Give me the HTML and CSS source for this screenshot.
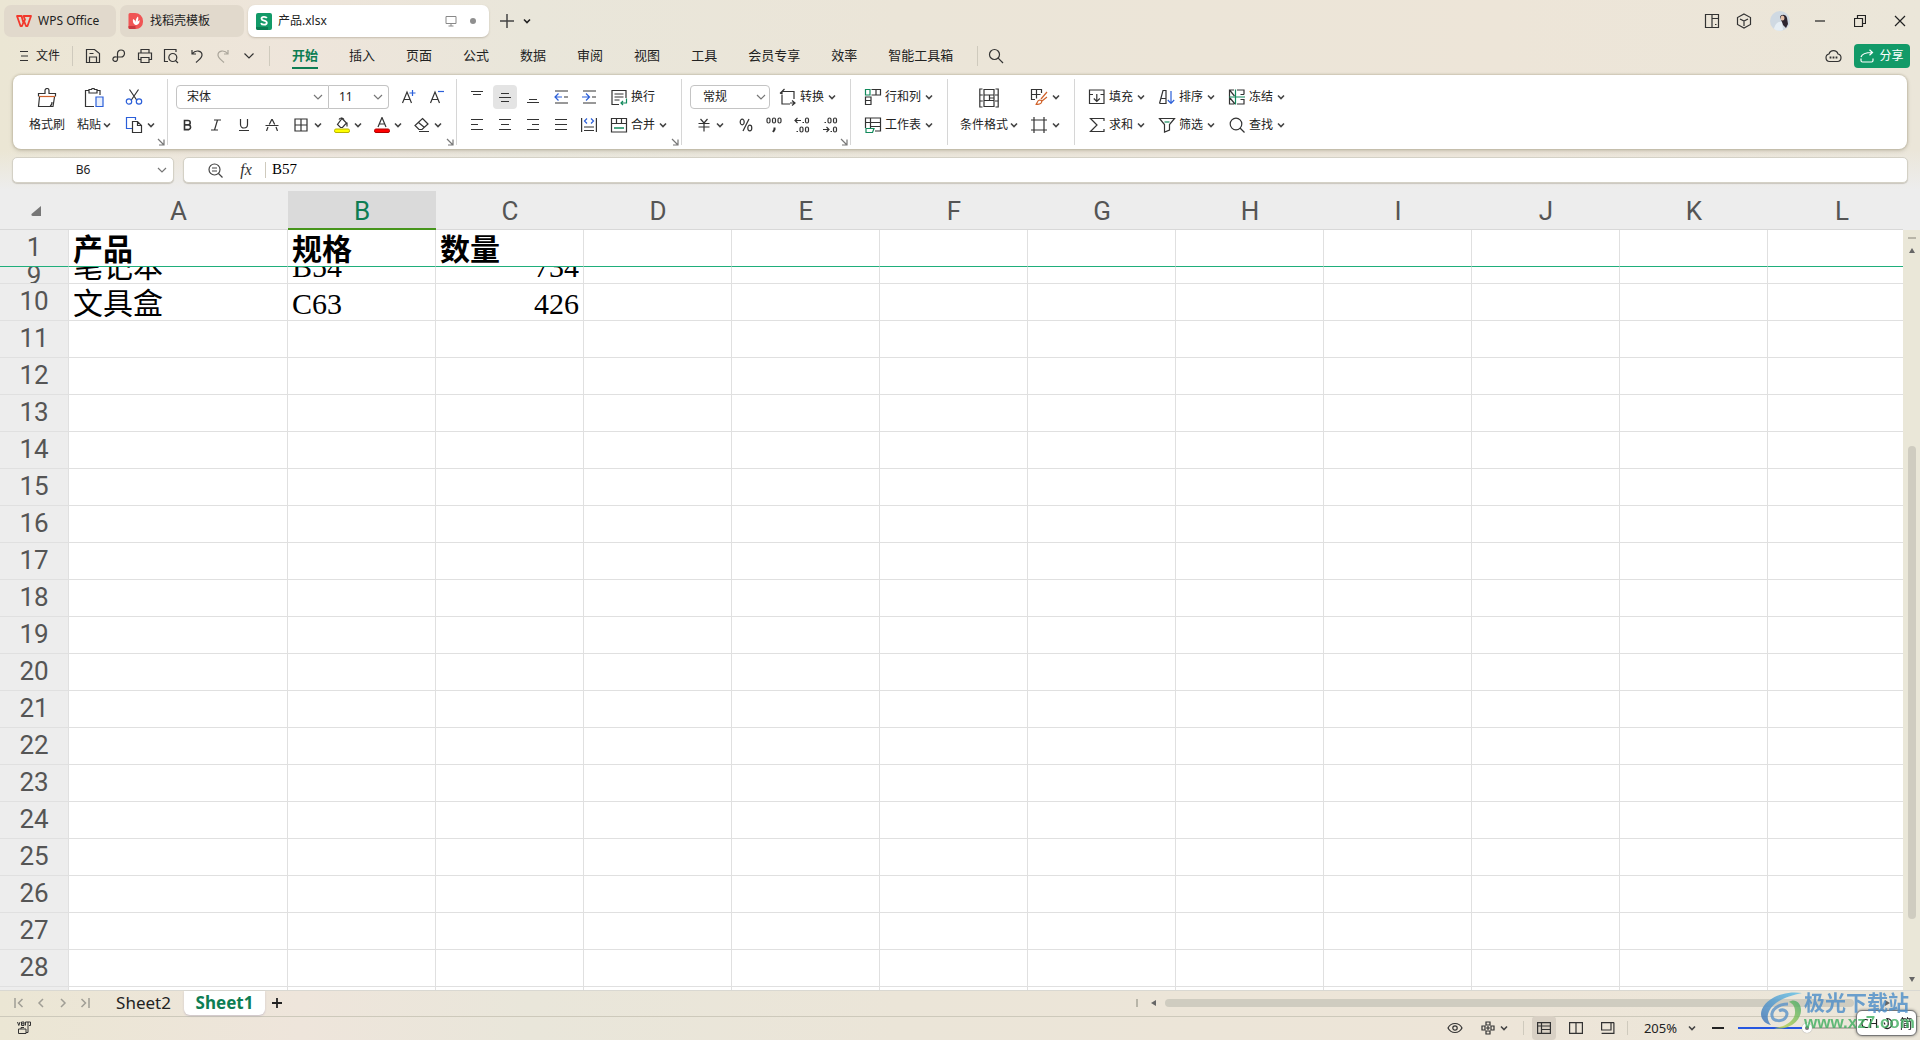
FILE: index.html
```html
<!DOCTYPE html>
<html lang="zh-CN">
<head>
<meta charset="utf-8">
<title>产品.xlsx - WPS Office</title>
<link rel="stylesheet" href="styles.css">
</head>
<body>
<svg class="defs" aria-hidden="true">
  <symbol id="chev" viewBox="0 0 8 8"><path d="M1 2.500l3 3 3-3" fill="none" stroke="currentColor" stroke-width="1.600"/></symbol>
  <symbol id="launch" viewBox="0 0 8 8"><path d="M1 1l5.500 5.500M7 1.500V7H2" fill="none" stroke="#777" stroke-width="1.200"/></symbol>
</svg>

<header class="titlebar">
  <button class="tab tab-home">
    <svg width="16" height="12" viewBox="0 0 16 12"><path d="M1 1h4.500l2 7 1.500-3.500L7.500 1H15l-3.500 10h-1.500L8 6 6 11H4.500z" fill="none" stroke="#f2382c" stroke-width="1.800" stroke-linejoin="round"/></svg>
    <span>WPS Office</span>
  </button>
  <button class="tab tab-template">
    <svg width="16" height="18" viewBox="0 0 16 18"><path d="M2 1h5a8 8 0 0 1 8 8v1a7 7 0 0 1-7 7H2a1.500 1.500 0 0 1-1.500-1.500v-13A1.500 1.500 0 0 1 2 1z" fill="#f05555"/><path d="M.5 14h7v3H2a1.500 1.500 0 0 1-1.500-1.500z" fill="#c93a40"/><path d="M7.500 13C5 12 4.500 9 5 7c2 1 2.500 2 2.500 3.500C7.500 8 8.500 5.500 10 4.500c.5 2 .5 3-.5 5 1-.5 1.500-1 2-1.500.5 3-1.500 5-4 5z" fill="#fff"/></svg>
    <span>找稻壳模板</span>
  </button>
  <button class="tab tab-file">
    <svg width="16" height="17" viewBox="0 0 16 17"><rect width="16" height="17" rx="2" fill="#129a68"/><path d="M0 14h12v3H2a2 2 0 0 1-2-2z" fill="#0a7c52"/><path d="M10.800 5.200C10 3.500 5.500 3.300 5.500 5.700c0 2.500 5.300 1.400 5.300 4.100 0 2.600-5 2.400-5.800.3" fill="none" stroke="#fff" stroke-width="1.800"/></svg>
    <span class="tab-name">产品.xlsx</span>
    <svg width="12" height="12" viewBox="0 0 12 12"><path d="M1 1.500h10v7H1zM3.500 11h5M6 8.500V11" fill="none" stroke="#888"/></svg>
    <span class="unsaved"></span>
  </button>
  <div class="new-tab">
    <button class="flat w28" aria-label="新建"><svg width="14" height="14" viewBox="0 0 14 14"><path d="M7 0v14M0 7h14" stroke="#444" stroke-width="1.500"/></svg></button>
    <button class="flat w12" aria-label="标签列表"><svg width="8" height="8"><use href="#chev"/></svg></button>
  </div>
  <div class="window-tools">
    <button class="flat w32" aria-label="分屏"><svg width="16" height="16" viewBox="0 0 16 16"><path d="M1.500 1.500h13v13h-13zM8 14.500v-13M8.500 5.500h6M11 11.500h1.500" fill="none" stroke="#333" stroke-width="1.200"/></svg></button>
    <button class="flat w32" aria-label="应用"><svg width="16" height="16" viewBox="0 0 16 16"><path d="M8 1l6.500 3.500v7L8 15l-6.500-3.500v-7zM4 6l4 2 4-2M8 8v5" fill="none" stroke="#333" stroke-width="1.200"/></svg></button>
    <button class="flat w40" aria-label="账号"><svg width="20" height="20" viewBox="0 0 20 20"><circle cx="10" cy="10" r="10" fill="#cfd9e2"/><path d="M10 6c1-3 6-3 7 1l1 6-2 4-3-3z" fill="#2c2530"/><ellipse cx="12.500" cy="7" rx="2" ry="2.600" fill="#e4bfa8"/><path d="M4 18c1-6 5-8 8-7l1 8a9 9 0 0 1-9-1z" fill="#e6eef4"/></svg></button>
    <button class="flat w40" aria-label="最小化"><svg width="12" height="12" viewBox="0 0 12 12"><path d="M1 6h10" stroke="#222" stroke-width="1.200"/></svg></button>
    <button class="flat w40" aria-label="还原"><svg width="12" height="12" viewBox="0 0 12 12"><path d="M.5 3.500h8v8h-8zM3.500 3.500v-3h8v8h-3" fill="none" stroke="#222" stroke-width="1.200"/></svg></button>
    <button class="flat w40" aria-label="关闭"><svg width="12" height="12" viewBox="0 0 12 12"><path d="M1 1l10 10M11 1L1 11" stroke="#222" stroke-width="1.200"/></svg></button>
  </div>
</header>

<nav class="menubar">
  <button class="file-menu"><svg width="10" height="12" viewBox="0 0 10 12"><path d="M1 1.500h8M2 6h7M1 10.500h8" stroke="#333" stroke-width="1.200"/></svg><span>文件</span></button>
  <span class="vline"></span>
  <div class="quick">
    <button class="flat w26" aria-label="保存"><svg width="16" height="16" viewBox="0 0 16 16"><path d="M1.500 1.500h8l5 4v9h-13zM4.500 14V9h7v5M4.500 5.500h4" fill="none" stroke="#333" stroke-width="1.200"/></svg></button>
    <button class="flat w26" aria-label="输出"><svg width="16" height="16" viewBox="0 0 16 16"><path d="M6.500 9V5.500A3.500 3.500 0 1 1 10 9H5a2.300 2.300 0 1 0 1.500 2.300V9" fill="none" stroke="#333" stroke-width="1.200"/></svg></button>
    <button class="flat w26" aria-label="打印"><svg width="16" height="16" viewBox="0 0 16 16"><path d="M4 5V1.500h8V5M4 11.500H1.500V5h13v6.500H12M4 9.500h8v5H4z" fill="none" stroke="#333" stroke-width="1.200"/></svg></button>
    <button class="flat w26" aria-label="打印预览"><svg width="16" height="16" viewBox="0 0 16 16"><path d="M5 13.500H1.500v-12H13V4M12.500 12.500L15 15" fill="none" stroke="#333" stroke-width="1.200"/><circle cx="9.800" cy="9.500" r="4" fill="none" stroke="#333" stroke-width="1.200"/></svg></button>
    <button class="flat w26" aria-label="撤销"><svg width="16" height="16" viewBox="0 0 16 16"><path d="M3 2v4h4M3 6c4-5 10-3 10 1 0 3-3 4.500-6 7.500" fill="none" stroke="#333" stroke-width="1.200"/></svg></button>
    <button class="flat w26" aria-label="恢复"><svg width="16" height="16" viewBox="0 0 16 16"><path d="M13 2v4H9M13 6C9 1 3 3 3 7c0 3 3 4.500 6 7.500" fill="none" stroke="#aaa59a" stroke-width="1.200"/></svg></button>
    <button class="flat w26" aria-label="更多"><svg width="12" height="12" viewBox="0 0 12 12"><path d="M1.500 3.500L6 8l4.500-4.500" fill="none" stroke="#333" stroke-width="1.200"/></svg></button>
  </div>
  <span class="vline"></span>
  <div class="menus">
    <a href="#" class="current">开始</a><a href="#">插入</a><a href="#">页面</a><a href="#">公式</a><a href="#">数据</a><a href="#">审阅</a><a href="#">视图</a><a href="#">工具</a><a href="#">会员专享</a><a href="#">效率</a><a href="#">智能工具箱</a>
  </div>
  <span class="vline"></span>
  <button class="flat w36" aria-label="搜索"><svg width="16" height="16" viewBox="0 0 16 16"><circle cx="6.500" cy="6.500" r="5" fill="none" stroke="#333" stroke-width="1.200"/><path d="M10.200 10.200L15 15" stroke="#333" stroke-width="1.200"/></svg></button>
  <div class="menu-right">
    <button class="flat" aria-label="云同步"><svg width="17" height="14" viewBox="0 0 17 14"><path d="M4.500 12.500a3.800 3.800 0 0 1-.5-7.500 4.700 4.700 0 0 1 9 0 3.800 3.800 0 0 1-.5 7.500z" fill="none" stroke="#333" stroke-width="1.200"/><path d="M4.600 8.500h1.800M7.600 8.500h1.800M10.600 8.500h1.800" stroke="#333" stroke-width="1.800"/></svg></button>
    <button class="share"><svg width="14" height="14" viewBox="0 0 14 14"><path d="M1 9.500v2A1.500 1.500 0 0 0 2.500 13h9a1.500 1.500 0 0 0 1.500-1.500v-2M1 8c1-3 4-4.500 11-4.500M9.500.8L12.500 3.500l-3 2.700" fill="none" stroke="#fff" stroke-width="1.200"/></svg><span>分享</span></button>
  </div>
</nav>

<section class="ribbon">
  <div class="group g-clip">
    <button class="big"><svg width="20" height="20" viewBox="0 0 20 20"><path d="M1.500 8.500V5.500H8V2.500a2 2 0 0 1 4 0v3h6.500v3M2.500 9l-1 9.500h14.500L17.500 9M13 18c1.500-.5 2-2 2-4" fill="none" stroke="#333" stroke-width="1.200"/><path d="M2 8.500h16" stroke="#d0622a" stroke-width="1.200"/></svg><span>格式刷</span></button>
    <button class="big"><svg width="20" height="20" viewBox="0 0 20 20"><path d="M5 2.500H1.500v16H10M13 2.500h3V7M5 1.500h2.500c0-1.500 3-1.500 3 0H13V5H5z" fill="none" stroke="#333" stroke-width="1.200"/><path d="M12 9h7v9.500h-7z" fill="#e8effc" stroke="#2b5fd9" stroke-width="1.200"/></svg><span>粘贴<svg class="chev" width="8" height="8"><use href="#chev"/></svg></span></button>
    <div class="rows">
      <button class="split" aria-label="剪切"><svg width="18" height="18" viewBox="0 0 18 18"><path d="M4.500 1.500l7.500 11M13.500 1.500L6 12.500" fill="none" stroke="#333" stroke-width="1.200"/><circle cx="4" cy="13.500" r="2.700" fill="none" stroke="#2b5fd9" stroke-width="1.200"/><circle cx="14" cy="13.500" r="2.700" fill="none" stroke="#2b5fd9" stroke-width="1.200"/></svg></button>
      <button class="split" aria-label="复制"><svg width="18" height="18" viewBox="0 0 18 18"><path d="M7 12.500H1.500v-11h9V4" fill="none" stroke="#2b5fd9" stroke-width="1.200"/><path d="M7.500 5.500h5l4 4v7h-9zM12.500 5.500v4h4" fill="#fff" stroke="#333" stroke-width="1.200"/></svg><svg class="chev" width="8" height="8"><use href="#chev"/></svg></button>
    </div>
    <svg class="launch" width="8" height="8"><use href="#launch"/></svg>
  </div>

  <div class="group g-font">
    <div class="rows">
      <div class="row font-row">
        <select class="font-name" aria-label="字体"><option>宋体</option></select><select class="font-size" aria-label="字号"><option>11</option></select>
        <button class="flat w28 push" aria-label="增大字号"><svg width="16" height="16" viewBox="0 0 16 16"><path d="M1.500 14L6 3l4.500 11M3 10.500h6" fill="none" stroke="#333" stroke-width="1.200"/><path d="M11.500 1v6M8.500 4h6" stroke="#2b5fd9" stroke-width="1.200"/></svg></button>
        <button class="flat w28" aria-label="减小字号"><svg width="16" height="16" viewBox="0 0 16 16"><path d="M1.500 14L6 3l4.500 11M3 10.500h6" fill="none" stroke="#333" stroke-width="1.200"/><path d="M9 2.500h6" stroke="#2b5fd9" stroke-width="1.200"/></svg></button>
      </div>
      <div class="row">
        <button class="flat w28" aria-label="加粗"><svg width="12" height="12" viewBox="0 0 12 12"><path d="M2.500 1.500H6a2.200 2.200 0 0 1 0 4.400H2.500zM2.500 5.900h4.200a2.400 2.400 0 0 1 0 4.700H2.500z" fill="none" stroke="#333" stroke-width="1.600"/></svg></button>
        <button class="flat w28" aria-label="倾斜"><svg width="12" height="12" viewBox="0 0 12 12"><path d="M4 1h7M1 11h7M7.500 1l-3 10" fill="none" stroke="#333" stroke-width="1.200"/></svg></button>
        <button class="flat w28" aria-label="下划线"><svg width="12" height="12" viewBox="0 0 12 12"><path d="M2.500 0v5.500a3.500 3.500 0 0 0 7 0V0M1 11.500h10" fill="none" stroke="#333" stroke-width="1.200"/></svg></button>
        <button class="flat w28" aria-label="删除线"><svg width="14" height="12" viewBox="0 0 14 12"><path d="M4.300 5.500L7 0l2.700 5.500M.5 6.500h13M3 8l-1.500 4M11 8l1.500 4" fill="none" stroke="#333" stroke-width="1.200"/></svg></button>
        <button class="split" aria-label="边框"><svg width="14" height="14" viewBox="0 0 14 14"><path d="M1 1h12v12H1zM7 1v12M1 7h12" fill="none" stroke="#333" stroke-width="1.200"/></svg><svg class="chev" width="8" height="8"><use href="#chev"/></svg></button>
        <button class="split" aria-label="填充颜色"><svg width="16" height="16" viewBox="0 0 16 16"><path d="M5 2.500C6 .5 9 .5 10 2.500M8 1.500l4.500 4.500-4 4.500h-2L3.500 7.500zM13 5.500v4" fill="none" stroke="#333" stroke-width="1.200"/><rect x=".5" y="12" width="15" height="3.500" rx="1.500" fill="#ff0" stroke="#b9b400"/></svg><svg class="chev" width="8" height="8"><use href="#chev"/></svg></button>
        <button class="split" aria-label="字体颜色"><svg width="16" height="16" viewBox="0 0 16 16"><path d="M4 10L8 .5 12 10M5.500 7h5" fill="none" stroke="#333" stroke-width="1.200"/><rect x=".5" y="12" width="15" height="3.500" rx="1.500" fill="#f00" stroke="#b00000"/></svg><svg class="chev" width="8" height="8"><use href="#chev"/></svg></button>
        <button class="split" aria-label="清除"><svg width="16" height="16" viewBox="0 0 16 16"><path d="M8.500 1.500L14 7l-6 5.500H5L1 8.500zM4.500 5.500l6 5M5 14.500h10" fill="none" stroke="#333" stroke-width="1.200"/></svg><svg class="chev" width="8" height="8"><use href="#chev"/></svg></button>
      </div>
    </div>
    <svg class="launch" width="8" height="8"><use href="#launch"/></svg>
  </div>

  <div class="group g-align">
    <div class="rows">
      <div class="row">
        <button class="flat w28" aria-label="顶端对齐"><svg width="14" height="14" viewBox="0 0 14 14"><path d="M1 1.500h12M3 4.500h8" stroke="#333" stroke-width="1.200"/></svg></button>
        <button class="flat w24 on mid" aria-label="垂直居中"><svg width="14" height="14" viewBox="0 0 14 14"><path d="M3 3.500h8M1 7.500h12M3 11.500h8" stroke="#333" stroke-width="1.200"/></svg></button>
        <button class="flat w28" aria-label="底端对齐"><svg width="14" height="14" viewBox="0 0 14 14"><path d="M3 9.500h8M1 12.500h12" stroke="#333" stroke-width="1.200"/></svg></button>
        <button class="flat w28" aria-label="减少缩进"><svg width="14" height="14" viewBox="0 0 14 14"><path d="M1 1h13M1 13h13M10 7h4" stroke="#333" stroke-width="1.200"/><path d="M8 7H1.500M4.500 3.500L1 7l3.500 3.500" fill="none" stroke="#2b5fd9" stroke-width="1.200"/></svg></button>
        <button class="flat w28" aria-label="增加缩进"><svg width="14" height="14" viewBox="0 0 14 14"><path d="M1 1h13M1 13h13M10 7h4" stroke="#333" stroke-width="1.200"/><path d="M0 7h7M4 3.500L7.500 7 4 10.500" fill="none" stroke="#2b5fd9" stroke-width="1.200"/></svg></button>
        <button class="tool push7"><svg width="18" height="18" viewBox="0 0 18 18"><path d="M9 16.500H2v-14h14V10M4.500 6h9M4.500 9h9M4.500 12h5" fill="none" stroke="#333" stroke-width="1.200"/><path d="M16.500 10.500V15h-5M13 13l-2 2 2 2" fill="none" stroke="#128a5c" stroke-width="1.200"/></svg><span>换行</span></button>
      </div>
      <div class="row">
        <button class="flat w28" aria-label="左对齐"><svg width="14" height="14" viewBox="0 0 14 14"><path d="M1 1.500h12M1 6.500h7M1 11.500h12" stroke="#333" stroke-width="1.200"/></svg></button>
        <button class="flat w28" aria-label="居中"><svg width="14" height="14" viewBox="0 0 14 14"><path d="M1 1.500h12M3 6.500h8M1 11.500h12" stroke="#333" stroke-width="1.200"/></svg></button>
        <button class="flat w28" aria-label="右对齐"><svg width="14" height="14" viewBox="0 0 14 14"><path d="M1 1.500h12M6 6.500h7M1 11.500h12" stroke="#333" stroke-width="1.200"/></svg></button>
        <button class="flat w28" aria-label="两端对齐"><svg width="14" height="14" viewBox="0 0 14 14"><path d="M1 1.500h12M1 6.500h12M1 11.500h12" stroke="#333" stroke-width="1.200"/></svg></button>
        <button class="flat w28" aria-label="分散对齐"><svg width="16" height="14" viewBox="0 0 16 14"><path d="M.6 0v14M15.400 0v14M3 9h10M3 12.500h10" stroke="#333" stroke-width="1.200"/><path d="M6 .5L3.500 3 6 5.500M10 .5L12.500 3 10 5.500" fill="none" stroke="#2b5fd9" stroke-width="1.200"/></svg></button>
        <button class="tool push7"><svg width="18" height="18" viewBox="0 0 18 18"><path d="M1.500 2.500h15v13.500h-15zM1.500 7.500h15M6.500 2.500v5M11.500 2.500v5" fill="none" stroke="#333" stroke-width="1.200"/><path d="M4 12h10" stroke="#128a5c" stroke-width="1.500"/></svg><span>合并</span><svg class="chev" width="8" height="8"><use href="#chev"/></svg></button>
      </div>
    </div>
    <svg class="launch" width="8" height="8"><use href="#launch"/></svg>
  </div>

  <div class="group g-number">
    <div class="rows">
      <div class="row">
        <select class="num-format" aria-label="数字格式"><option>常规</option></select>
        <button class="tool push9"><svg width="18" height="18" viewBox="0 0 18 18"><path d="M3 7v9h8M15 11V3.500H3M5.500 1L3 3.500 1 5.500M3 3.500v3M13 12.500l3 2.500-3 2.500M11 15h5" fill="none" stroke="#333" stroke-width="1.200"/></svg><span>转换</span><svg class="chev" width="8" height="8"><use href="#chev"/></svg></button>
      </div>
      <div class="row">
        <button class="split" aria-label="货币"><svg width="12" height="14" viewBox="0 0 12 14"><path d="M2.500 1L6 5l3.500-4M.5 5.500h11M.5 9h11M6 5v8.500" fill="none" stroke="#333" stroke-width="1.200"/></svg><svg class="chev" width="8" height="8"><use href="#chev"/></svg></button>
        <button class="flat w28" aria-label="百分比"><svg width="14" height="14" viewBox="0 0 14 14"><path d="M10 1L4 13" stroke="#333" stroke-width="1.200"/><ellipse cx="3.200" cy="4" rx="2" ry="2.800" fill="none" stroke="#333" stroke-width="1.200"/><ellipse cx="10.800" cy="10" rx="2" ry="2.800" fill="none" stroke="#333" stroke-width="1.200"/></svg></button>
        <button class="flat w28" aria-label="千位分隔"><svg width="16" height="16" viewBox="0 0 16 16"><g fill="none" stroke="#333" stroke-width="1.200"><rect x="1" y="1" width="3" height="5" rx="1.500"/><rect x="6.500" y="1" width="3" height="5" rx="1.500"/><rect x="12" y="1" width="3" height="5" rx="1.500"/></g><path d="M8.500 10.500v2L7 15" fill="none" stroke="#333" stroke-width="2"/></svg></button>
        <button class="flat w28" aria-label="增加小数位"><svg width="16" height="16" viewBox="0 0 16 16"><g fill="none" stroke="#333" stroke-width="1.200"><rect x="11.500" y="1" width="3" height="5" rx="1.500"/><rect x="6" y="10" width="3" height="5" rx="1.500"/><rect x="11.500" y="10" width="3" height="5" rx="1.500"/><path d="M7 3.500H1M3.500 1L1 3.500 3.500 6M8.500 5.500h1.500M2.500 14.500h1.500"/></g></svg></button>
        <button class="flat w28" aria-label="减少小数位"><svg width="16" height="16" viewBox="0 0 16 16"><g fill="none" stroke="#333" stroke-width="1.200"><rect x="6" y="1" width="3" height="5" rx="1.500"/><rect x="11.500" y="1" width="3" height="5" rx="1.500"/><rect x="11.500" y="10" width="3" height="5" rx="1.500"/><path d="M1 12.500h6M4.500 10L7 12.500 4.500 15M2.500 5.500h1.500M8.500 14.500h1.500"/></g></svg></button>
      </div>
    </div>
    <svg class="launch" width="8" height="8"><use href="#launch"/></svg>
  </div>

  <div class="group g-cells">
    <div class="rows">
      <button class="tool"><svg width="18" height="18" viewBox="0 0 18 18"><path d="M7.500 1.500h9V7h-9M12 1.500V7M1.500 9v7.500H7V9zM1.500 12.500H7" fill="none" stroke="#333" stroke-width="1.200"/><path d="M1.500 1.500H6V7H1.500z" fill="none" stroke="#128a5c" stroke-width="1.200"/></svg><span>行和列</span><svg class="chev" width="8" height="8"><use href="#chev"/></svg></button>
      <button class="tool"><svg width="18" height="18" viewBox="0 0 18 18"><path d="M1.500 12V2h15v13H11M1.500 6.500h15M6.500 2v10M6.500 10.500h10" fill="none" stroke="#333" stroke-width="1.200"/><path d="M2 12.500h8l-1.500 4H2z" fill="none" stroke="#128a5c" stroke-width="1.200"/></svg><span>工作表</span><svg class="chev" width="8" height="8"><use href="#chev"/></svg></button>
    </div>
  </div>

  <div class="group g-style">
    <button class="big"><svg width="20" height="20" viewBox="0 0 20 20"><path d="M3.500 1H.8v18h2.700M16.500 1h2.700v18h-2.700M.8 7h3M.8 13h3M16 7h3M16 13h3M5 1.500h10V7H5zM5 7v5.500M10.500 7v5.500M5 12.500h10V18.500H5zM15 7v5.500M10.500 10h4.500" fill="none" stroke="#333" stroke-width="1.200"/></svg><span>条件格式<svg class="chev" width="8" height="8"><use href="#chev"/></svg></span></button>
    <div class="rows">
      <button class="split" aria-label="表格样式"><svg width="18" height="18" viewBox="0 0 18 18"><path d="M5 11.500H1.500v-10h10V5M1.500 6.500h9M6.500 1.500v9" fill="none" stroke="#333" stroke-width="1.200"/><path d="M17 4l-6 7M17 9l-5 4M5.500 16.500c2 0 1-4 4-4.500 2 0 2.500 1 2 2.500-1 2-4 2-6 2z" fill="none" stroke="#d0622a" stroke-width="1.200"/></svg><svg class="chev" width="8" height="8"><use href="#chev"/></svg></button>
      <button class="split" aria-label="单元格样式"><svg width="18" height="18" viewBox="0 0 18 18"><path d="M1 4h16M1 14h16M4 1v16M14 1v16" fill="none" stroke="#333" stroke-width="1.200"/></svg><svg class="chev" width="8" height="8"><use href="#chev"/></svg></button>
    </div>
  </div>

  <div class="group g-edit">
    <div class="edit-grid">
      <button class="tool"><svg width="18" height="18" viewBox="0 0 18 18"><path d="M1.500 2h14.500v13.500H1.500zM1.500 6.500H5M12.500 6.500H16M8.800 6v7M5.800 10.500l3 3 3-3" fill="none" stroke="#333" stroke-width="1.200"/></svg><span>填充</span><svg class="chev" width="8" height="8"><use href="#chev"/></svg></button>
      <button class="tool"><svg width="18" height="18" viewBox="0 0 18 18"><path d="M1.500 15.500L5 2.500h3v13H1.500M3.500 10.500H8" fill="none" stroke="#333" stroke-width="1.200"/><path d="M13 3v12M9.800 12L13 15.300l3.200-3.300" fill="none" stroke="#2b5fd9" stroke-width="1.200"/></svg><span>排序</span><svg class="chev" width="8" height="8"><use href="#chev"/></svg></button>
      <button class="tool"><svg width="18" height="18" viewBox="0 0 18 18"><path d="M6 2H1.500v14H6M1.500 2L6.500 8M2 10l5 6M9 2h7v4.500M16 11v5H9M12.500 6.500H16M12.500 11.500H16" fill="none" stroke="#333" stroke-width="1.200"/><path d="M7.500 1.500v15M1 9h16" stroke="#128a5c" stroke-width="1.200"/></svg><span>冻结</span><svg class="chev" width="8" height="8"><use href="#chev"/></svg></button>
      <button class="tool"><svg width="18" height="18" viewBox="0 0 18 18"><path d="M16 5V2.500H2.500L9 9l-6.500 6.500H16V13" fill="none" stroke="#333" stroke-width="1.200"/></svg><span>求和</span><svg class="chev" width="8" height="8"><use href="#chev"/></svg></button>
      <button class="tool"><svg width="18" height="18" viewBox="0 0 18 18"><path d="M1.500 2.500h15L11.500 8.500v5.500l-5 2V8.500z" fill="none" stroke="#333" stroke-width="1.200"/><path d="M6.500 6h5" stroke="#128a5c" stroke-width="1.200"/></svg><span>筛选</span><svg class="chev" width="8" height="8"><use href="#chev"/></svg></button>
      <button class="tool"><svg width="18" height="18" viewBox="0 0 18 18"><circle cx="8" cy="8" r="5.800" fill="none" stroke="#333" stroke-width="1.200"/><path d="M12 12l4.500 4.500" stroke="#333" stroke-width="1.200"/></svg><span>查找</span><svg class="chev" width="8" height="8"><use href="#chev"/></svg></button>
    </div>
  </div>
</section>

<section class="formula-bar">
  <select class="name-box" aria-label="名称框"><option>B6</option></select>
  <div class="formula">
    <button class="flat w24" aria-label="浏览公式结果"><svg width="15" height="15" viewBox="0 0 15 15"><circle cx="6.500" cy="6.500" r="5.500" fill="none" stroke="#444" stroke-width="1.200"/><path d="M10.500 10.500L14.500 14.500M4 5h5M4 8h5" stroke="#444" stroke-width="1.200"/></svg></button>
    <button class="flat fx" aria-label="插入函数"><i>fx</i></button>
    <span class="vline short"></span>
    <input type="text" value="B57" aria-label="编辑栏">
  </div>
</section>

<main class="sheet">
  <div class="sheet-view">
    <table class="grid">
      <colgroup><col class="c-num"><col class="c-a"><col><col><col><col><col><col><col><col><col><col><col></colgroup>
      <thead>
        <tr><th><svg class="corner" width="12" height="12" viewBox="0 0 12 12"><path d="M11 1v10H2.500a1.500 1.500 0 0 1-1-2z" fill="#777"/></svg></th><th>A</th><th class="active">B</th><th>C</th><th>D</th><th>E</th><th>F</th><th>G</th><th>H</th><th>I</th><th>J</th><th>K</th><th>L</th></tr>
      </thead>
      <tbody>
        <tr class="frozen"><th>1</th><td>产品</td><td>规格</td><td>数量</td><td></td><td></td><td></td><td></td><td></td><td></td><td></td><td></td><td></td></tr>
        <tr class="cut"><th><div>9</div></th><td><div>笔记本</div></td><td><div>B54</div></td><td class="num"><div>734</div></td><td></td><td></td><td></td><td></td><td></td><td></td><td></td><td></td><td></td></tr>
        <tr><th>10</th><td>文具盒</td><td>C63</td><td class="num">426</td><td></td><td></td><td></td><td></td><td></td><td></td><td></td><td></td><td></td></tr>
        <tr><th>11</th><td></td><td></td><td></td><td></td><td></td><td></td><td></td><td></td><td></td><td></td><td></td><td></td></tr>
        <tr><th>12</th><td></td><td></td><td></td><td></td><td></td><td></td><td></td><td></td><td></td><td></td><td></td><td></td></tr>
        <tr><th>13</th><td></td><td></td><td></td><td></td><td></td><td></td><td></td><td></td><td></td><td></td><td></td><td></td></tr>
        <tr><th>14</th><td></td><td></td><td></td><td></td><td></td><td></td><td></td><td></td><td></td><td></td><td></td><td></td></tr>
        <tr><th>15</th><td></td><td></td><td></td><td></td><td></td><td></td><td></td><td></td><td></td><td></td><td></td><td></td></tr>
        <tr><th>16</th><td></td><td></td><td></td><td></td><td></td><td></td><td></td><td></td><td></td><td></td><td></td><td></td></tr>
        <tr><th>17</th><td></td><td></td><td></td><td></td><td></td><td></td><td></td><td></td><td></td><td></td><td></td><td></td></tr>
        <tr><th>18</th><td></td><td></td><td></td><td></td><td></td><td></td><td></td><td></td><td></td><td></td><td></td><td></td></tr>
        <tr><th>19</th><td></td><td></td><td></td><td></td><td></td><td></td><td></td><td></td><td></td><td></td><td></td><td></td></tr>
        <tr><th>20</th><td></td><td></td><td></td><td></td><td></td><td></td><td></td><td></td><td></td><td></td><td></td><td></td></tr>
        <tr><th>21</th><td></td><td></td><td></td><td></td><td></td><td></td><td></td><td></td><td></td><td></td><td></td><td></td></tr>
        <tr><th>22</th><td></td><td></td><td></td><td></td><td></td><td></td><td></td><td></td><td></td><td></td><td></td><td></td></tr>
        <tr><th>23</th><td></td><td></td><td></td><td></td><td></td><td></td><td></td><td></td><td></td><td></td><td></td><td></td></tr>
        <tr><th>24</th><td></td><td></td><td></td><td></td><td></td><td></td><td></td><td></td><td></td><td></td><td></td><td></td></tr>
        <tr><th>25</th><td></td><td></td><td></td><td></td><td></td><td></td><td></td><td></td><td></td><td></td><td></td><td></td></tr>
        <tr><th>26</th><td></td><td></td><td></td><td></td><td></td><td></td><td></td><td></td><td></td><td></td><td></td><td></td></tr>
        <tr><th>27</th><td></td><td></td><td></td><td></td><td></td><td></td><td></td><td></td><td></td><td></td><td></td><td></td></tr>
        <tr><th>28</th><td></td><td></td><td></td><td></td><td></td><td></td><td></td><td></td><td></td><td></td><td></td><td></td></tr>
        <tr><th></th><td></td><td></td><td></td><td></td><td></td><td></td><td></td><td></td><td></td><td></td><td></td><td></td></tr>
      </tbody>
    </table>
  </div>
  <div class="vscroll">
    <span class="split-handle"></span>
    <svg width="6" height="6" viewBox="0 0 6 6"><path d="M3 0l3 5H0z" fill="#666"/></svg>
    <div class="vtrack"><div class="space-before"></div><div class="vthumb"></div><div class="space-after"></div></div>
    <svg width="6" height="6" viewBox="0 0 6 6"><path d="M0 1h6L3 6z" fill="#666"/></svg>
  </div>
</main>

<footer>
  <div class="sheetbar">
    <div class="sheet-nav">
      <button class="flat w22" aria-label="第一张"><svg width="10" height="10" viewBox="0 0 10 10"><path d="M1 0v10M8.500 1L4.500 5l4 4" fill="none" stroke="#a09e95" stroke-width="1.500"/></svg></button>
      <button class="flat w22" aria-label="上一张"><svg width="10" height="10" viewBox="0 0 10 10"><path d="M7 1L3 5l4 4" fill="none" stroke="#a09e95" stroke-width="1.500"/></svg></button>
      <button class="flat w22" aria-label="下一张"><svg width="10" height="10" viewBox="0 0 10 10"><path d="M3 1l4 4-4 4" fill="none" stroke="#a09e95" stroke-width="1.500"/></svg></button>
      <button class="flat w22" aria-label="最后一张"><svg width="10" height="10" viewBox="0 0 10 10"><path d="M9 0v10M1.500 1l4 4-4 4" fill="none" stroke="#a09e95" stroke-width="1.500"/></svg></button>
    </div>
    <button class="sheet-tab">Sheet2</button>
    <button class="sheet-tab selected">Sheet1</button>
    <button class="flat w24" aria-label="新建工作表"><svg width="10" height="10" viewBox="0 0 10 10"><path d="M5 0v10M0 5h10" stroke="#222" stroke-width="1.800"/></svg></button>
    <div class="hscroll">
      <span class="hhandle"></span>
      <svg width="6" height="6" viewBox="0 0 6 6"><path d="M5 0v6L0 3z" fill="#666"/></svg>
      <div class="hthumb"></div>
      <svg width="6" height="6" viewBox="0 0 6 6"><path d="M1 0v6l5-3z" fill="#666"/></svg>
    </div>
  </div>
  <div class="statusbar">
    <svg width="14" height="14" viewBox="0 0 14 14"><path d="M.5 1l1.300 3.500L3 1M4.500 1v3.500H7V1H4.500M4.500 2.800H7M8.500 4.500V1h5v3.500H12M11 1v10.500H9M1.500 8h7.500v4.500H1.500zM4 8V6.500h3" fill="none" stroke="#333"/></svg>
    <div class="status-right">
      <button class="flat w28" aria-label="护眼模式"><svg width="16" height="12" viewBox="0 0 16 12"><path d="M1 6c3-6 11-6 14 0-3 6-11 6-14 0z" fill="none" stroke="#333" stroke-width="1.200"/><circle cx="8" cy="6" r="2.200" fill="none" stroke="#333" stroke-width="1.200"/></svg></button>
      <button class="split cross" aria-label="阅读模式"><svg width="14" height="14" viewBox="0 0 14 14"><path d="M5 1h4v3H5zM5 10h4v3H5zM1 5h3v4H1zM10 5h3v4h-3zM7 5v4M5 7h4" fill="none" stroke="#333" stroke-width="1.200"/></svg><svg class="chev" width="8" height="8"><use href="#chev"/></svg></button>
      <span class="vline tiny"></span>
      <button class="flat w24 view current-view" aria-label="普通视图"><svg width="14" height="12" viewBox="0 0 14 12"><path d="M.6.6h12.800v10.800H.6zM.6 4h12.800M4.500.6v10.800M4.500 7.500h9" fill="none" stroke="#333" stroke-width="1.200"/></svg></button>
      <button class="flat w24 view" aria-label="分页预览"><svg width="14" height="12" viewBox="0 0 14 12"><path d="M.6.6h12.800v10.800H.6zM7 .6v10.800" fill="none" stroke="#333" stroke-width="1.200"/></svg></button>
      <button class="flat w24 view" aria-label="页面布局"><svg width="14" height="12" viewBox="0 0 14 12"><path d="M.6.6h9.400v7.400H.6zM12.900.6v10.800H.6M10 .6h3" fill="none" stroke="#333" stroke-width="1.200"/></svg></button>
      <span class="vline tiny"></span>
      <button class="zoom-value">205%<svg class="chev" width="8" height="8"><use href="#chev"/></svg></button>
      <button class="flat w24" aria-label="缩小"><svg width="12" height="10" viewBox="0 0 12 10"><path d="M0 5h12" stroke="#222" stroke-width="2"/></svg></button>
      <input class="zoom-slider" type="range" min="0" max="100" value="51" aria-label="缩放">
    </div>
  </div>
</footer>

<div class="ime"><span>CH</span><svg width="13" height="13" viewBox="0 0 13 13"><path d="M5 1.500a5 5 0 1 1-2 9.500C6.500 10 7.500 5.500 5 1.500zM2 5.500l1 2" fill="none" stroke="#222" stroke-width="1.200"/></svg><span>简</span></div>
<div class="watermark">
  <svg width="44" height="40" viewBox="0 0 44 40"><defs><linearGradient id="wb" x1="0" y1="1" x2="1" y2="0"><stop offset="0" stop-color="#3b6fb5"/><stop offset="1" stop-color="#62c4ea"/></linearGradient><linearGradient id="wg" x1="0" y1="1" x2="1" y2="0"><stop offset="0" stop-color="#d5dc4a"/><stop offset="1" stop-color="#3fa968"/></linearGradient></defs><path d="M42 2C22-1 2 9 1 23c0 6 5 10 10 11C6 29 6 20 16 12 24 6 34 4 42 2z" fill="url(#wb)"/><path d="M29 11c5-4 12 0 12 8 0 12-14 21-27 18 12-1 22-8 21-17 0-5-3-8-6-9z" fill="url(#wg)"/><path d="M28 13c-10 0-17 6-16 12s11 6 14 1-2-9-7-6" fill="none" stroke="#5b93c8" stroke-width="3"/></svg>
  <div class="wm-text"><b>极光下载站</b><span>www.xz7.com</span></div>
</div>
</body>
</html>
```
FILE: styles.css
```css
* { box-sizing: border-box; }

body {
  margin: 0;
  height: 100vh;
  overflow: hidden;
  display: flex;
  flex-direction: column;
  font: 12px/16px "Noto Sans", "Noto Sans CJK SC", sans-serif;
  color: #222;
  background:
    linear-gradient(180deg, rgba(237,237,237,0) 150px, #ededed 190px, #ededed 960px, rgba(237,237,237,0) 961px),
    linear-gradient(90deg, #ebe6d4 0, #eee5db 300px, #e9e6da 530px, #ebe5d8 900px, #ede5d8 1500px, #ebe6d9 100%);
}

button, select, input { font: inherit; color: inherit; margin: 0; }
button { border: 0; padding: 0; background: none; white-space: nowrap; }
svg { display: block; flex: none; }
.defs { position: absolute; width: 0; height: 0; }
.chev { color: #444; }

.flat { display: flex; align-items: center; justify-content: center; flex: none; height: 24px; border-radius: 4px; }
.w12 { width: 12px; }
.w22 { width: 22px; }
.w24 { width: 24px; }
.w26 { width: 26px; }
.w28 { width: 28px; }
.w32 { width: 32px; }
.w36 { width: 36px; }
.w40 { width: 40px; }
.on { background: #e4e4e4; }
.vline { flex: none; width: 1px; height: 20px; background: #cfcabd; }

/* Title bar */
.titlebar { display: flex; align-items: center; gap: 4px; height: 40px; padding: 2px 0 0 4px; flex: none; }
.tab { display: flex; align-items: center; gap: 6px; height: 32px; border-radius: 7px; background: #e1d9cc; }
.tab-home { width: 112px; padding-left: 12px; }
.tab-template { width: 124px; padding-left: 8px; }
.tab-file { width: 241px; padding: 0 13px 0 8px; background: #fff; box-shadow: 0 1px 2px rgba(120,110,90,.35); }
.tab-name { flex: 1; text-align: left; }
.unsaved { width: 6px; height: 6px; margin-left: 7px; border-radius: 50%; background: #8f8f8f; }
.new-tab { display: flex; }
.window-tools { display: flex; margin-left: auto; }

/* Menu bar */
.menubar { display: flex; align-items: center; height: 35px; padding: 0 10px 4px 19px; flex: none; font-size: 13px; }
.file-menu { display: flex; align-items: center; gap: 7px; margin-right: 12px; font-size: 12px; }
.quick { display: flex; margin: 0 7px; }
.menus { display: flex; gap: 31px; margin: 0 24px 0 22px; }
.menus a { color: inherit; text-decoration: none; line-height: 22px; padding: 2px 0 1px; border-bottom: 2px solid transparent; }
.menus .current { color: #0d7d53; font-weight: 700; border-color: #0d7d53; }
.menu-right { display: flex; align-items: center; gap: 12px; margin-left: auto; }
.share { display: flex; align-items: center; justify-content: center; gap: 5px; width: 56px; height: 24px; border-radius: 4px; background: #129a68; color: #fff; font-size: 12px; }

/* Ribbon */
.ribbon { display: flex; flex: none; height: 74px; margin: 0 13px; border-radius: 8px; background: #fff; box-shadow: 0 0 2px 1px rgba(150,140,115,.35), 0 2px 4px rgba(120,110,90,.25); }
.group { position: relative; display: flex; padding-top: 10px; }
.group:not(:last-child)::after { content: ""; position: absolute; right: 0; top: 4px; bottom: 4px; width: 1px; background: #d6d6d6; }
.rows { display: flex; flex-direction: column; gap: 4px; }
.row { display: flex; align-items: center; height: 24px; }
.launch { position: absolute; right: 3px; bottom: 3px; }
.g-clip { width: 155px; padding-left: 14px; gap: 7px; }
.g-font { width: 289px; padding-left: 6px; }
.g-align { width: 225px; padding-left: 6px; }
.g-number { width: 169px; padding-left: 8px; }
.g-cells { width: 97px; padding-left: 13px; }
.g-style { width: 127px; padding-left: 12px; gap: 8px; }
.g-edit { padding-left: 13px; }
.big { display: flex; flex-direction: column; align-items: center; justify-content: space-between; height: 50px; padding: 3px 0 2px; }
.big span { display: flex; align-items: center; gap: 2px; }
.g-clip .big { min-width: 40px; }
.split { display: flex; align-items: center; width: 40px; height: 24px; padding-left: 8px; }
.split > svg:first-child { margin-right: auto; }
.split .chev { margin-right: 4px; }
.g-clip .split, .g-style .split { padding-left: 4px; }
.g-clip .split .chev, .g-style .split .chev { margin-right: 6px; }
.g-number .split { width: 42px; margin-right: 0; }
.g-number .split .chev { margin-right: 8px; }
.mid { margin: 0 2px; }
.tool { display: flex; align-items: center; height: 24px; }
.tool span { margin: 0 4px 0 3px; }
.push { margin-left: 6px; }
.push7 { margin-left: 7px; }
.push9 { margin-left: 9px; }
.edit-grid { display: grid; grid-template-columns: repeat(3, 57px); gap: 4px 13px; align-content: start; }

select {
  appearance: none;
  height: 24px;
  border: 1px solid #c4c4c4;
  border-radius: 4px;
  padding: 0 10px;
  background: #fff url("data:image/svg+xml,%3Csvg xmlns='http://www.w3.org/2000/svg' width='10' height='8'%3E%3Cpath d='M1 2l4 4 4-4' fill='none' stroke='%23777' stroke-width='1.2'/%3E%3C/svg%3E") no-repeat right 5px center;
}
.font-row { padding-left: 2px; }
.font-name { width: 153px; border-radius: 4px 0 0 4px; }
.font-size { width: 60px; border-left: 0; border-radius: 0 4px 4px 0; }
.num-format { width: 80px; padding-left: 12px; background-position: right 3px center; }

/* Formula bar */
.formula-bar { display: flex; gap: 9px; flex: none; margin: 8px 12px 0; height: 26px; }
.name-box { width: 162px; height: 26px; border-color: #d4d1c6; border-radius: 5px; text-align: center; text-align-last: center; padding: 0 34px 0 14px; background-position: right 6px center; box-shadow: 0 1px 1px rgba(120,110,90,.3); }
.formula { flex: 1; display: flex; align-items: center; height: 26px; padding-left: 19px; border: 1px solid #d4d1c6; border-radius: 5px; background: #fff; box-shadow: 0 1px 1px rgba(120,110,90,.3); }
.fx { width: 38px; font: 16px/20px "Liberation Serif", serif; color: #333; }
.short { height: 16px; }
.formula input { flex: 1; border: 0; outline: 0; padding: 0 0 3px 6px; background: none; font: 15px/18px "Liberation Serif", "Noto Sans CJK SC", serif; color: #000; }

/* Sheet */
.sheet { display: flex; flex: 1; min-height: 0; margin-top: 8px; background: #ededed; }
.sheet-view { flex: 1; min-width: 0; overflow: hidden; background: #ededed; }
.grid { table-layout: fixed; width: 1916px; border-collapse: separate; border-spacing: 0; }
.grid col { width: 148px; }
.grid .c-num { width: 69px; }
.grid .c-a { width: 219px; }
.grid th, .grid td { height: 37px; padding: 0 4px; border: 0 solid #e0e0e0; border-width: 0 1px 1px 0; }
.grid th { padding: 0 0 3px; background: #ededed; color: #555; font: 26px/30px Roboto, sans-serif; }
.grid thead th { height: 39px; padding: 2px 0 0; border-color: #d8d8d8; border-right: 0; }
.grid thead .active { background: #dadada; color: #0d7d53; border-bottom: 2px solid #46951c; }
.grid td { background: #fff; vertical-align: bottom; color: #000; font: 30px/32px "Liberation Serif", "Noto Sans CJK SC", serif; white-space: nowrap; }
.grid .num { text-align: right; }
.grid .frozen > * { border-bottom-color: #1fae7b; }
.grid .frozen td { font-weight: 700; }
.grid .cut > * { height: 17px; padding-top: 0; padding-bottom: 0; }
.cut div { display: flex; align-items: flex-end; height: 16px; overflow: hidden; }
.cut th div { align-items: center; justify-content: center; }
.cut .num div { justify-content: flex-end; }
.corner { margin: 0 0 0 30px; }

.vscroll { display: flex; flex-direction: column; align-items: center; width: 17px; margin-top: 39px; padding: 7px 0 8px; background: #eae7d8; }
.split-handle { width: 8px; height: 2px; margin-bottom: 9px; background: #b8b5a8; }
.vtrack { flex: 1; display: flex; flex-direction: column; width: 8px; margin: 6px 0; }
.space-before { flex: 187; }
.vthumb { flex: 477; border-radius: 4px; background: #cfccc0; }
.space-after { flex: 51; }

/* Sheet tabs and status bar */
.sheetbar { display: flex; align-items: flex-start; height: 27px; border-top: 1px solid #d9d8d2; border-bottom: 1px solid #cdc9bb; }
.sheet-nav { display: flex; padding-left: 8px; margin-right: 7px; }
.sheet-tab { width: 81px; height: 24px; font-size: 17px; line-height: 22px; }
.sheet-tab.selected { background: #fff; border-radius: 0 0 6px 6px; color: #0d7d53; font-weight: 700; box-shadow: 0 1px 2px rgba(120,110,160,.3); }
.hscroll { display: flex; align-items: center; flex: none; width: 41%; height: 24px; margin-left: auto; padding: 0 30px 0 3px; }
.hhandle { width: 2px; height: 8px; margin-right: 13px; background: #b8b5a8; }
.hthumb { flex: 1; height: 8px; margin: 0 30px 0 8px; border-radius: 4px; background: #cfccc0; }
.statusbar { display: flex; align-items: center; height: 23px; padding: 0 0 2px 17px; }
.status-right { display: flex; align-items: center; margin-left: auto; padding-right: 76px; }
.status-right .cross { width: 47px; padding-left: 12px; }
.cross .chev { margin-right: 8px; }
.tiny { height: 14px; margin: 0 8px 0 7px; }
.view + .view { margin-left: 8px; }
.current-view { background: #d8d0c4; }
.zoom-value { display: flex; align-items: center; gap: 11px; margin: 0 10px 0 8px; font-size: 13px; }
.zoom-slider { appearance: none; width: 136px; height: 12px; margin: 0 -30px 0 8px; background: linear-gradient(90deg, #2657e0 50%, #b9b5aa 50%) center / 100% 2px no-repeat; }
.zoom-slider::-webkit-slider-thumb { appearance: none; width: 10px; height: 10px; border: 3px solid #fff; border-radius: 50%; background: #777; box-shadow: 0 0 1px #888; }

/* Floating input method badge and site mark */
.ime { position: fixed; right: 3px; bottom: 4px; display: flex; align-items: center; justify-content: center; gap: 4px; width: 61px; height: 26px; border: 1px solid #777; border-radius: 6px; background: #fff; box-shadow: 0 0 3px rgba(0,0,0,.5); font-size: 13px; }
.watermark { position: fixed; right: 4px; bottom: 8px; display: flex; width: 156px; opacity: .8; pointer-events: none; }
.wm-text { display: flex; flex-direction: column; white-space: nowrap; }
.wm-text b { color: #4a8cc8; font-size: 21px; line-height: 23px; }
.wm-text span { color: #3fae5f; font: 700 17px/18px "Liberation Sans", sans-serif; }
```
